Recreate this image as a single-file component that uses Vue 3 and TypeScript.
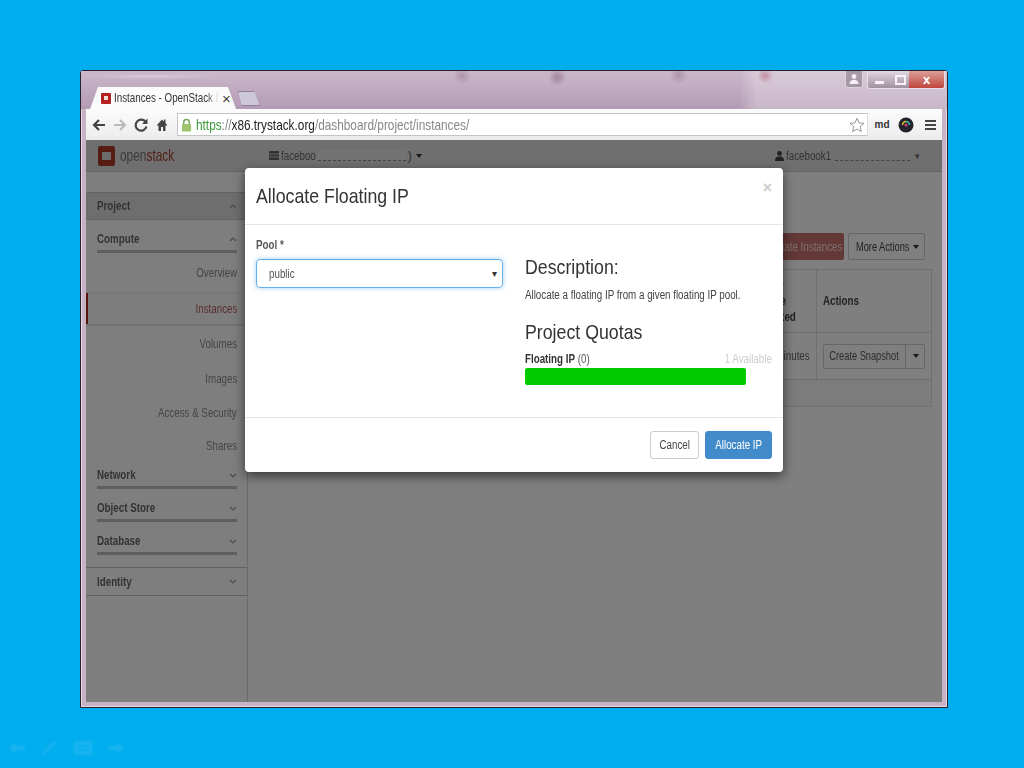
<template>
  <div class="slide">
    <div class="window">
      <!-- tab strip -->
      <div class="tabstrip">
        <div class="tab">
          <span class="favicon"><span></span></span>
          <span class="tab-title"><span class="sq">Instances - OpenStack Da</span></span>
          <span class="tab-close">×</span>
        </div>
        <div class="new-tab"></div>
        <div class="win-controls">
          <div class="ctl-user">
            <svg width="12" height="12" viewBox="0 0 12 12"><circle cx="6" cy="3.500" r="2.400" fill="#f4eef4" /><path d="M1.500 11c0-3 2-4.200 4.500-4.200s4.500 1.200 4.500 4.200z" fill="#f4eef4" /></svg>
          </div>
          <div class="ctl-group">
            <div class="ctl ctl-min"><span></span></div>
            <div class="ctl ctl-max"><span></span></div>
            <div class="ctl ctl-close">x</div>
          </div>
        </div>
      </div>

      <!-- browser toolbar -->
      <div class="toolbar">
        <svg class="nav" width="16" height="16" viewBox="0 0 16 16"><path d="M14 8H4M8 3L3 8l5 5" fill="none" stroke="#444" stroke-width="2.200" /></svg>
        <svg class="nav" width="16" height="16" viewBox="0 0 16 16"><path d="M2 8h10M8 3l5 5-5 5" fill="none" stroke="#b8b8b8" stroke-width="2" /></svg>
        <svg class="nav" width="16" height="16" viewBox="0 0 16 16"><path d="M13 5.500A5.500 5.500 0 1 0 13.500 9.500" fill="none" stroke="#444" stroke-width="2.200" /><path d="M14.500 1.500v5.500H9z" fill="#444" /></svg>
        <svg class="nav" width="16" height="16" viewBox="0 0 16 16"><path d="M8 2.500L2.500 8.500H4.500V14H7v-4h2v4h2.500V8.500h2L11.500 6V2.500H10V4.500z" fill="#444" /></svg>
        <div class="omnibox">
          <svg width="11" height="14" viewBox="0 0 12 15"><path d="M3 7V4.500a3 3 0 0 1 6 0V7" fill="none" stroke="#7aa85a" stroke-width="1.600" /><rect x="1" y="6.500" width="10" height="8" rx="1" fill="#9cc46c" /></svg>
          <span class="url"><span class="sq"><span class="scheme">https</span><span class="rest">://</span><span class="host">x86.trystack.org</span><span class="rest">/dashboard/project/instances/</span></span></span>
          <svg class="star" width="16" height="16" viewBox="0 0 16 16"><path d="M8 1.200l2 4.700 5 .4-3.800 3.300 1.200 5L8 12l-4.400 2.600 1.200-5L1 6.300l5-.4z" fill="#fff" stroke="#999" /></svg>
        </div>
        <span class="ext-md">md</span>
        <svg width="16" height="16" viewBox="0 0 16 16"><circle cx="8" cy="8" r="7.500" fill="#23232e" /><path d="M4.500 8a3.500 3.500 0 0 1 3.500-3.500" fill="none" stroke="#e8c030" stroke-width="1.600" /><path d="M8 4.500A3.500 3.500 0 0 1 11.500 8" fill="none" stroke="#38c0a0" stroke-width="1.600" /><circle cx="8" cy="8" r="1.500" fill="#d04080" /></svg>
        <div class="hamburger"><span></span><span></span><span></span></div>
      </div>

      <!-- dashboard page -->
      <div class="page">
        <div class="topbar">
          <div class="logo">
            <span class="logo-mark"><span></span></span>
            <span class="logo-text">open<b>stack</b></span>
          </div>
          <div class="project-pick">
            <svg width="10" height="9" viewBox="0 0 10 9"><rect width="10" height="9" fill="#666" /><path d="M0 3h10M0 6h10" stroke="#ccc" /></svg>
            <span class="sq pick-name">faceboo</span><span class="redact wide"></span><span>)</span><span class="caret"></span>
          </div>
          <div class="user-pick">
            <svg width="9" height="10" viewBox="0 0 9 10"><circle cx="4.500" cy="2.500" r="2.400" fill="#444" /><path d="M0 10c0-3.500 1.500-4.500 4.500-4.500S9 6.500 9 10z" fill="#444" /></svg>
            <span class="sq pick-name">facebook1</span><span class="redact"></span><span class="tiny-caret">▾</span>
          </div>
        </div>

        <div class="main">
          <nav class="sidebar">
            <div class="nav-project">
              <span class="sq">Project</span>
              <svg class="chev" width="8" height="5" viewBox="0 0 8 5"><path d="M1 4l3-3 3 3" /></svg>
            </div>
            <div class="nav-group">
              <span class="sq">Compute</span>
              <svg class="chev" width="8" height="5" viewBox="0 0 8 5"><path d="M1 4l3-3 3 3" /></svg>
            </div>
            <a
              v-for="item in computeItems"
              :key="item.label"
              class="nav-item"
              :class="{ active: item.active }"
              :style="{ height: item.h + 'px' }"
            ><span class="sq r">{{ item.label }}</span></a>
            <div v-for="g in groups" :key="g" class="nav-group">
              <span class="sq">{{ g }}</span>
              <svg class="chev" width="8" height="5" viewBox="0 0 8 5"><path d="M1 1l3 3 3-3" /></svg>
            </div>
            <div class="nav-project plain">
              <span class="sq">Identity</span>
              <svg class="chev" width="8" height="5" viewBox="0 0 8 5"><path d="M1 1l3 3 3-3" /></svg>
            </div>
          </nav>

          <section class="content">
            <div class="actions">
              <button class="btn-danger"><span class="sq c">Terminate Instances</span></button>
              <button class="btn-more"><span class="sq c tight">More Actions</span><span class="caret"></span></button>
            </div>
            <div class="table">
              <div class="thead">
                <div class="col-time"><span class="sq">Time<br />since<br />created</span></div>
                <div class="col-actions"><span class="sq">Actions</span></div>
              </div>
              <div class="trow">
                <div class="col-time"><span class="sq r">10 minutes</span></div>
                <div class="col-actions">
                  <div class="split">
                    <span class="split-main"><span class="sq c tight">Create Snapshot</span></span>
                    <span class="split-caret"><span class="caret"></span></span>
                  </div>
                </div>
              </div>
              <div class="tfoot"></div>
            </div>
          </section>
        </div>

        <div class="backdrop"></div>

        <!-- modal -->
        <div class="modal">
          <header class="modal-head">
            <h3><span class="sq big">Allocate Floating IP</span></h3>
            <span class="modal-close">×</span>
          </header>
          <div class="modal-body">
            <div class="col-left">
              <label><span class="sq">Pool *</span></label>
              <div class="select"><span class="sq">public</span><i>▾</i></div>
            </div>
            <div class="col-right">
              <h3><span class="sq big">Description:</span></h3>
              <p><span class="sq">Allocate a floating IP from a given floating IP pool.</span></p>
              <h3 class="quota-title"><span class="sq big">Project Quotas</span></h3>
              <div class="quota-row">
                <span class="sq"><b>Floating IP</b> (0)</span>
                <span class="sq r avail">1 Available</span>
              </div>
              <div class="progress" :style="{ width: progressWidth + 'px' }"></div>
            </div>
          </div>
          <footer class="modal-foot">
            <button class="btn-cancel"><span class="sq c">Cancel</span></button>
            <button class="btn-primary"><span class="sq c">Allocate IP</span></button>
          </footer>
        </div>
      </div>
    </div>

    <!-- slide player controls -->
    <div class="player">
      <svg width="18" height="16" viewBox="0 0 18 16"><path d="M8 2L1 8l7 6v-4h9V6H8z" /></svg>
      <svg width="18" height="16" viewBox="0 0 18 16"><path d="M1 15l1-3L13 1l2 2L4 14z" /></svg>
      <svg width="18" height="16" viewBox="0 0 18 16"><path d="M0 1h18v14H0zM3 5v1.500h12V5zM3 9v1.500h12V9z" fill-rule="evenodd" /></svg>
      <svg width="18" height="16" viewBox="0 0 18 16"><path d="M10 2l7 6-7 6v-4H1V6h9z" /></svg>
    </div>
  </div>
</template>

<script setup lang="ts">
interface NavItem {
  label: string
  h: number
  active?: boolean
}

const computeItems: NavItem[] = [
  { label: 'Overview', h: 39 },
  { label: 'Instances', h: 34, active: true },
  { label: 'Volumes', h: 35 },
  { label: 'Images', h: 35 },
  { label: 'Access & Security', h: 33 },
  { label: 'Shares', h: 33 },
]

const groups = ['Network', 'Object Store', 'Database']

const progressWidth = 221
</script>

<style>
html,
body {
  margin: 0;
  background: #00aeef;
}
</style>

<style scoped>
.slide {
  width: 1024px;
  height: 768px;
  box-sizing: border-box;
  padding: 70px 76px 0 80px;
  background: #00aeef;
  font-family: 'Liberation Sans', Arial, sans-serif;
  overflow: hidden;
}

/* the whole screenshot was squeezed sideways, so its text is condensed */
.sq {
  display: inline-block;
  white-space: nowrap;
  transform: scaleX(0.815);
  transform-origin: left center;
}

.sq.r {
  transform-origin: right center;
}

.sq.c {
  transform-origin: center;
}

.sq.tight {
  transform: scaleX(0.77);
}

.sq.big {
  transform: scaleX(0.845);
}

.window {
  height: 638px;
  box-sizing: border-box;
  display: flex;
  flex-direction: column;
  padding: 0 5px 5px;
  border: 1px solid #26222c;
  border-radius: 3px 3px 0 0;
  background: #c8b2c6;
  box-shadow: inset 1px 0 0 #e6d8e6, inset -1px 0 0 #e6d8e6, inset 0 -1px 0 #e6d8e6;
}

/* tab strip */
.tabstrip {
  height: 38px;
  margin: 0 -5px;
  padding-left: 9px;
  display: flex;
  align-items: flex-end;
  background:
    radial-gradient(circle at 55% 16%, rgba(110, 60, 90, 0.4) 0, rgba(110, 60, 90, 0) 9px),
    radial-gradient(circle at 44% 12%, rgba(110, 60, 90, 0.28) 0, rgba(110, 60, 90, 0) 9px),
    radial-gradient(circle at 69% 10%, rgba(110, 60, 90, 0.28) 0, rgba(110, 60, 90, 0) 9px),
    radial-gradient(circle at 79% 12%, rgba(160, 50, 70, 0.38) 0, rgba(160, 50, 70, 0) 8px),
    radial-gradient(ellipse at 8% 14%, rgba(255, 255, 255, 0.3) 0, rgba(255, 255, 255, 0) 70px),
    linear-gradient(90deg, rgba(255, 255, 255, 0) 76%, rgba(255, 255, 255, 0.28) 78%),
    linear-gradient(#cbb7ca 0, #b39bb4 100%);
  position: relative;
}

.tab {
  width: 150px;
  height: 22px;
  box-sizing: border-box;
  padding: 0 7px 0 11px;
  display: flex;
  align-items: center;
  background: #fbfbfb;
  clip-path: polygon(0 100%, 8px 0, 138px 0, 146px 100%);
  color: #333;
  font-size: 12px;
  white-space: nowrap;
}

.favicon {
  width: 10px;
  height: 11px;
  flex: none;
  display: flex;
  align-items: center;
  justify-content: center;
  background: #b3221f;
  border-radius: 1px;
}

.favicon span {
  width: 4px;
  height: 4px;
  background: #f4dcdc;
}

.tab-title {
  width: 105px;
  flex: none;
  margin-left: 3px;
  overflow: hidden;
  -webkit-mask-image: linear-gradient(90deg, #000 88%, transparent);
  mask-image: linear-gradient(90deg, #000 88%, transparent);
}

.tab-close {
  margin-left: 3px;
  font-size: 15px;
  line-height: 1;
  color: #444;
}

.new-tab {
  width: 20px;
  height: 13px;
  margin: 0 0 3px -2px;
  background: #ccc8d8;
  border: 1px solid #8d8296;
  clip-path: polygon(0 0, 16px 0, 100% 100%, 4px 100%);
}

.win-controls {
  position: absolute;
  top: 0;
  right: 2px;
  display: flex;
  gap: 4px;
}

.ctl-user {
  width: 18px;
  height: 17px;
  display: flex;
  align-items: center;
  justify-content: center;
  border: 1px solid rgba(240, 235, 240, 0.7);
  border-top: 0;
  border-radius: 0 0 3px 3px;
  background: rgba(130, 115, 130, 0.55);
  box-sizing: border-box;
}

.ctl-group {
  display: flex;
  height: 17px;
  border: 1px solid rgba(240, 235, 240, 0.7);
  border-top: 0;
  border-radius: 0 0 3px 3px;
  overflow: hidden;
}

.ctl {
  display: flex;
  align-items: center;
  justify-content: center;
  background: linear-gradient(rgba(255, 255, 255, 0.25), rgba(100, 85, 100, 0.45));
}

.ctl-min {
  width: 23px;
}

.ctl-min span {
  width: 9px;
  height: 3px;
  margin-top: 5px;
  background: #f6f2f6;
}

.ctl-max {
  width: 18px;
}

.ctl-max span {
  width: 7px;
  height: 6px;
  border: 2px solid #f6f2f6;
}

.ctl-close {
  width: 35px;
  background: linear-gradient(#dca09a, #c0453c);
  color: #fff;
  font-size: 13px;
  font-weight: 700;
}

/* browser toolbar */
.toolbar {
  height: 31px;
  box-sizing: border-box;
  display: flex;
  align-items: center;
  padding: 0 5px;
  background: linear-gradient(#fbfbfb, #ececec);
}

.nav {
  margin-right: 5px;
}

.omnibox {
  width: 691px;
  height: 23px;
  box-sizing: border-box;
  margin: 0 6px 0 2px;
  padding: 0 2px 0 3px;
  display: flex;
  align-items: center;
  gap: 4px;
  background: #fff;
  border: 1px solid #c4c4c4;
  border-right-color: #ddd;
}

.url {
  flex: 1;
  font-size: 14.500px;
  white-space: nowrap;
}

.scheme {
  color: #3a9a3a;
}

.host {
  color: #222;
}

.rest {
  color: #888;
}

.ext-md {
  width: 16px;
  margin-right: 8px;
  text-align: center;
  font-size: 10px;
  font-weight: 700;
  color: #333;
}

.hamburger {
  margin-left: 11px;
  width: 11px;
  display: flex;
  flex-direction: column;
  gap: 2px;
}

.hamburger span {
  height: 2px;
  background: #444;
}

/* dashboard */
.page {
  position: relative;
  flex: 1;
  min-height: 0;
  display: flex;
  flex-direction: column;
  background: #fff;
  overflow: hidden;
}

.topbar {
  height: 32px;
  flex: none;
  box-sizing: border-box;
  display: flex;
  align-items: center;
  padding: 0 22px 0 12px;
  background: #dedede;
  border-bottom: 1px solid #c8c8c8;
  color: #666;
  font-size: 12px;
}

.logo {
  width: 171px;
  display: flex;
  align-items: center;
  gap: 5px;
}

.logo-mark {
  width: 17px;
  height: 20px;
  display: flex;
  align-items: center;
  justify-content: center;
  background: #aa3826;
  border-radius: 2px;
}

.logo-mark span {
  width: 9px;
  height: 8px;
  background: #d8d8d8;
}

.logo-text {
  display: inline-block;
  font-size: 17px;
  white-space: nowrap;
  transform: scaleX(0.7);
  transform-origin: left center;
  color: #777;
}

.logo-text b {
  font-weight: 400;
  color: #a83e30;
}

.project-pick,
.user-pick {
  display: flex;
  align-items: center;
  gap: 2px;
  white-space: nowrap;
}

.user-pick {
  margin-left: auto;
}

.pick-name {
  margin-right: -8px;
}

.redact {
  width: 75px;
  height: 9px;
  border-bottom: 1px dashed #888;
}

.redact.wide {
  width: 88px;
  height: 10px;
  background: #e6e6e6;
}

.tiny-caret {
  margin-left: 3px;
  font-size: 9px;
}

.caret {
  display: inline-block;
  width: 0;
  height: 0;
  margin-left: 2px;
  vertical-align: middle;
  border-top: 4px solid #333;
  border-left: 3.500px solid transparent;
  border-right: 3.500px solid transparent;
}

.main {
  flex: 1;
  min-height: 0;
  display: flex;
}

.sidebar {
  width: 162px;
  flex: none;
  box-sizing: border-box;
  padding-top: 20px;
  border-right: 1px solid #d6d6d6;
  background: #fdfdfd;
  font-size: 12px;
}

.nav-project {
  height: 28px;
  box-sizing: border-box;
  display: flex;
  align-items: center;
  justify-content: space-between;
  padding: 0 10px 0 11px;
  background: #dcdcdc;
  border-top: 1px solid #c4c4c4;
  border-bottom: 1px solid #c4c4c4;
  color: #666;
  font-weight: 700;
}

.nav-project.plain {
  height: 29px;
  margin-top: 12px;
  background: none;
  color: #666;
}

.nav-group {
  height: 33px;
  box-sizing: border-box;
  margin: 0 10px 0 11px;
  padding-top: 8px;
  display: flex;
  align-items: center;
  justify-content: space-between;
  border-bottom: 3px solid #bcbcbc;
  color: #666;
  font-weight: 700;
}

.chev {
  fill: none;
  stroke: #999;
  stroke-width: 1.200;
}

.nav-item {
  display: flex;
  align-items: center;
  justify-content: flex-end;
  box-sizing: border-box;
  padding-right: 10px;
  color: #8a8a8a;
}

/* the first closed group tucks up under the last link */
.nav-item:last-of-type {
  margin-bottom: -6px;
}

.nav-item.active {
  color: #b4625e;
  background: #fafafa;
  border-top: 1px solid #ececec;
  border-bottom: 2px solid #e4e4e4;
  box-shadow: inset 2px 0 0 #b0281e;
}

.content {
  flex: 1;
  min-width: 0;
  box-sizing: border-box;
  padding: 61px 10px 0 0;
}

.actions {
  display: flex;
  justify-content: flex-end;
  gap: 4px;
  height: 27px;
  padding-right: 7px;
}

.actions button {
  height: 27px;
  box-sizing: border-box;
  border-radius: 2px;
  font: 12px 'Liberation Sans', Arial, sans-serif;
  padding: 0;
  white-space: nowrap;
}

.actions .btn-danger {
  width: 100px;
  padding-right: 8px;
  border: 1px solid #c8706c;
  background: #c8706c;
  color: #f4dcda;
}

.btn-more {
  width: 77px;
  border: 1px solid #ccc;
  background: #fff;
  color: #444;
}

.btn-more .sq {
  margin: 0 -6px;
}

.table {
  margin-top: 9px;
  border: 1px solid #dedede;
  font-size: 12px;
  color: #666;
}

.thead,
.trow {
  display: flex;
  justify-content: flex-end;
  align-items: stretch;
  border-bottom: 1px solid #dedede;
}

.thead {
  height: 63px;
  box-sizing: border-box;
  font-weight: 700;
  color: #444;
}

.trow {
  height: 47px;
  box-sizing: border-box;
}

.col-time {
  width: 55px;
  box-sizing: border-box;
  display: flex;
  align-items: center;
  justify-content: flex-end;
  padding-right: 6px;
  line-height: 16px;
  white-space: nowrap;
}

.thead .col-time {
  display: block;
  padding: 6px 0 0;
  line-height: 16.500px;
}

.col-actions {
  width: 115px;
  box-sizing: border-box;
  display: flex;
  align-items: center;
  padding-left: 6px;
  border-left: 1px solid #dedede;
}

.split {
  display: flex;
  height: 25px;
  width: 102px;
  box-sizing: border-box;
  border: 1px solid #ccc;
  background: #fff;
  border-radius: 2px;
  line-height: 23px;
  color: #555;
}

.split-main {
  flex: 1;
  min-width: 0;
  display: flex;
  justify-content: center;
  border-right: 1px solid #ccc;
}

.split-caret {
  width: 18px;
  text-align: center;
}

.tfoot {
  height: 26px;
  background: #f8f8f8;
}

.backdrop {
  position: absolute;
  inset: 0;
  background: rgba(0, 0, 0, 0.5);
}

/* modal sits over the backdrop */
.modal {
  position: absolute;
  left: 159px;
  top: 28px;
  width: 538px;
  background: #fff;
  border-radius: 4px;
  box-shadow: 0 4px 12px rgba(0, 0, 0, 0.55);
  color: #333;
}

.modal-head {
  height: 57px;
  box-sizing: border-box;
  display: flex;
  align-items: flex-start;
  justify-content: space-between;
  padding: 15px 11px 0;
  border-bottom: 1px solid #e5e5e5;
}

.modal-head h3 {
  margin: 0;
  font-size: 21px;
  line-height: 26px;
  font-weight: 400;
}

.modal-close {
  margin: -5px 0 0;
  font-size: 16px;
  line-height: 20px;
  font-weight: 700;
  color: #ccc;
}

.modal-body {
  height: 192px;
  box-sizing: border-box;
  display: flex;
  padding: 13px 11px 0;
  gap: 22px;
}

.col-left {
  width: 247px;
  flex: none;
}

.col-left label {
  display: block;
  height: 21px;
  line-height: 14px;
  font-size: 12px;
  font-weight: 700;
  color: #555;
}

.select {
  height: 29px;
  box-sizing: border-box;
  display: flex;
  align-items: center;
  justify-content: space-between;
  padding: 0 5px 0 12px;
  border: 1px solid #66afe9;
  border-radius: 4px;
  box-shadow: 0 0 5px rgba(102, 175, 233, 0.6);
  font-size: 12px;
  color: #555;
}

.select i {
  font-style: normal;
  font-size: 10px;
  color: #333;
}

.col-right {
  flex: 1;
  min-width: 0;
  padding-top: 18px;
}

.col-right h3 {
  margin: 0;
  font-size: 21px;
  line-height: 22px;
  font-weight: 400;
}

.col-right p {
  margin: 10px 0 0;
  font-size: 12px;
  line-height: 14px;
  color: #444;
}

.col-right .quota-title {
  margin-top: 19px;
}

.quota-row {
  margin-top: 9px;
  display: flex;
  justify-content: space-between;
  font-size: 12px;
  line-height: 14px;
  color: #555;
}

.quota-row b {
  color: #333;
}

.avail {
  color: #ccc;
}

.progress {
  height: 17px;
  margin-top: 2px;
  background: #00cc00;
  border-radius: 2px;
}

.modal-foot {
  height: 55px;
  box-sizing: border-box;
  display: flex;
  justify-content: flex-end;
  align-items: flex-start;
  gap: 6px;
  padding: 13px 11px 0;
  border-top: 1px solid #e5e5e5;
}

.modal-foot button {
  height: 28px;
  box-sizing: border-box;
  border-radius: 3px;
  padding: 0;
  font: 12px 'Liberation Sans', Arial, sans-serif;
  white-space: nowrap;
}

.btn-cancel {
  width: 49px;
  border: 1px solid #ccc;
  background: #fff;
  color: #444;
}

.btn-primary {
  width: 67px;
  border: 1px solid #428bca;
  background: #428bca;
  color: #fff;
}

.player {
  display: flex;
  gap: 15px;
  margin: 32px 0 0 -72px;
}

.player svg {
  fill: #19b4f0;
  filter: blur(0.8px);
}
</style>
